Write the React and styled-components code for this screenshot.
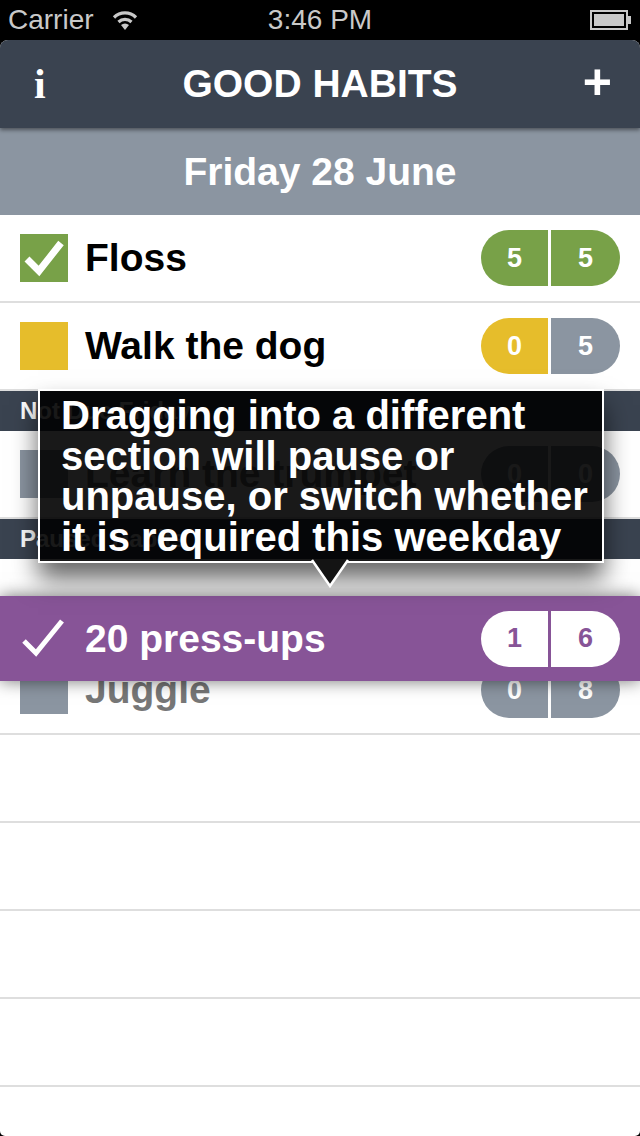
import React from 'react';
import styled, { createGlobalStyle } from 'styled-components';

const GlobalStyle = createGlobalStyle`
  html, body {
    margin: 0;
    padding: 0;
    background: #000;
  }
  body {
    font-family: 'Liberation Sans', Arial, sans-serif;
  }
`;

const slate = '#3a4350';
const steel = '#8b95a1';
const green = '#78a148';
const yellow = '#e6bd2b';
const purple = '#875497';

const Screen = styled.div`
  position: relative;
  width: 640px;
  height: 1136px;
  overflow: hidden;
  background: #000;
  display: flex;
  flex-direction: column;
`;

const StatusBar = styled.div`
  height: 40px;
  flex: none;
  display: grid;
  grid-template-columns: 1fr auto 1fr;
  align-items: center;
  padding: 0 8px;
  color: #c9c9c9;
  font-size: 28px;
`;

const Carrier = styled.div`
  display: flex;
  align-items: center;
  gap: 16px;
`;

const Battery = styled.div`
  justify-self: end;
  display: flex;
  align-items: center;
`;

const Body = styled.div`
  flex: 1;
  display: flex;
  flex-direction: column;
  background: #fff;
  border-radius: 8px 8px 5px 5px;
  overflow: hidden;
`;

const NavBar = styled.div`
  position: relative;
  z-index: 2;
  height: 88px;
  flex: none;
  display: grid;
  grid-template-columns: 84px 1fr 84px;
  align-items: center;
  background: ${slate};
  color: #fff;
  box-shadow: 0 2px 4px rgba(0, 0, 0, 0.45);
`;

const InfoButton = styled.span`
  font-family: 'Liberation Serif', 'Times New Roman', serif;
  font-weight: bold;
  font-size: 42px;
  padding-left: 34px;
`;

const Title = styled.h1`
  margin: 0;
  text-align: center;
  font-size: 39px;
  font-weight: bold;
`;

const AddButton = styled.span`
  justify-self: end;
  padding-right: 28px;
  font-size: 50px;
  font-weight: bold;
  line-height: 1;
  margin-top: -4px;
`;

const DateBar = styled.div`
  height: 87px;
  flex: none;
  display: flex;
  align-items: center;
  justify-content: center;
  background: ${steel};
  color: #fff;
  font-size: 39px;
  font-weight: bold;
`;

const Row = styled.div`
  height: 86px;
  flex: none;
  display: flex;
  align-items: center;
  gap: 17px;
  padding: 0 20px;
  background: ${({ $bg }) => $bg || '#fff'};
  border-bottom: 2px solid ${({ $line }) => $line || '#dedede'};
`;

const Label = styled.span`
  flex: 1;
  font-size: 39px;
  font-weight: bold;
  color: ${({ $color }) => $color || '#000'};
`;

const Square = styled.div`
  width: 48px;
  height: 48px;
  flex: none;
  background: ${({ $color }) => $color};
`;

const Counts = styled.div`
  display: flex;
  gap: 3px;
`;

const Count = styled.div`
  width: 67px;
  height: 56px;
  display: flex;
  align-items: center;
  justify-content: center;
  background: ${({ $bg }) => $bg};
  color: ${({ $color }) => $color || '#fff'};
  font-size: 27px;
  font-weight: bold;

  &:first-child {
    border-radius: 28px 0 0 28px;
  }
  &:last-child {
    width: 69px;
    border-radius: 0 28px 28px 0;
  }
`;

const SectionHeader = styled.div`
  height: 40px;
  flex: none;
  display: flex;
  align-items: center;
  padding: 0 20px;
  background: ${slate};
  color: #fff;
  font-size: 24px;
  font-weight: bold;
`;

const Gap = styled.div`
  height: 88px;
  flex: none;
`;

const DraggedRow = styled(Row)`
  position: absolute;
  top: 596px;
  left: 0;
  right: 0;
  height: 85px;
  z-index: 5;
  border-bottom: none;
  box-shadow: 0 0 16px rgba(0, 0, 0, 0.55);
`;

const Tooltip = styled.div`
  position: absolute;
  top: 389px;
  left: 38px;
  width: 566px;
  height: 174px;
  box-sizing: border-box;
  z-index: 6;
  padding: 4px 8px 4px 21px;
  border: 2px solid #fff;
  background: rgba(0, 0, 0, 0.9);
  color: #fff;
  font-size: 40px;
  font-weight: bold;
  line-height: 40.5px;
  white-space: nowrap;
  box-shadow: 0 16px 24px rgba(0, 0, 0, 0.6);
`;

const Tail = styled.svg`
  position: absolute;
  left: 270px;
  bottom: -29px;
`;

const Check = () => (
  <svg width="48" height="48" viewBox="0 0 48 48">
    <rect width="48" height="48" fill={green} />
    <path d="M7 25 L19 37 L41 9" fill="none" stroke="#fff" strokeWidth="7" />
  </svg>
);

const Tick = () => (
  <svg width="48" height="48" viewBox="0 0 48 48">
    <path d="M4 26 L16 38 L42 6" fill="none" stroke="#fff" strokeWidth="5" />
  </svg>
);

const Wifi = () => (
  <svg width="30" height="22" viewBox="0 0 30 22">
    <path d="M15 21 L11 16 A6 6 0 0 1 19 16 Z" fill="#c9c9c9" />
    <path d="M8.5 13 A9.5 9.5 0 0 1 21.5 13" fill="none" stroke="#c9c9c9" strokeWidth="3.2" />
    <path d="M4 8.5 A15.5 15.5 0 0 1 26 8.5" fill="none" stroke="#c9c9c9" strokeWidth="3.2" />
  </svg>
);

const BatteryIcon = () => (
  <svg width="42" height="20" viewBox="0 0 42 20">
    <rect x="1" y="1" width="36" height="18" fill="none" stroke="#c9c9c9" strokeWidth="2" />
    <rect x="4" y="4" width="30" height="12" fill="#c9c9c9" />
    <rect x="38" y="6" width="3" height="8" fill="#c9c9c9" />
  </svg>
);

const habits = [
  { name: 'Floss', done: true, counts: [['5', green], ['5', green]] },
  { name: 'Walk the dog', square: yellow, counts: [['0', yellow], ['5', steel]] },
];

const emptyRows = [1, 2, 3, 4];

const App = () => (
  <Screen>
    <GlobalStyle />
    <StatusBar>
      <Carrier>
        Carrier <Wifi />
      </Carrier>
      <span>3:46 PM</span>
      <Battery>
        <BatteryIcon />
      </Battery>
    </StatusBar>

    <Body>
      <NavBar>
        <InfoButton>i</InfoButton>
        <Title>GOOD HABITS</Title>
        <AddButton>+</AddButton>
      </NavBar>
      <DateBar>Friday 28 June</DateBar>

      {habits.map((h) => (
        <Row key={h.name}>
          {h.done ? <Check /> : <Square $color={h.square} />}
          <Label>{h.name}</Label>
          <Counts>
            {h.counts.map(([n, c], i) => (
              <Count key={i} $bg={c}>
                {n}
              </Count>
            ))}
          </Counts>
        </Row>
      ))}

      <SectionHeader>Not Due Friday</SectionHeader>
      <Row>
        <Square $color={steel} />
        <Label $color="#7a7a7a">Learn the trumpet</Label>
        <Counts>
          <Count $bg={steel}>0</Count>
          <Count $bg={steel}>0</Count>
        </Counts>
      </Row>
      <SectionHeader>Paused Habits</SectionHeader>
      <Gap />
      <Row>
        <Square $color={steel} />
        <Label $color="#777">Juggle</Label>
        <Counts>
          <Count $bg={steel}>0</Count>
          <Count $bg={steel}>8</Count>
        </Counts>
      </Row>
      {emptyRows.map((r) => (
        <Row key={r} />
      ))}
    </Body>

    <Tooltip>
      Dragging into a different
      <br />
      section will pause or
      <br />
      unpause, or switch whether
      <br />
      it is required this weekday
      <Tail width="40" height="31" viewBox="0 0 40 31">
        <path d="M2 0 L20 27 L38 0 Z" fill="#141414" />
        <path d="M2 1 L20 27 L38 1" fill="none" stroke="#fff" strokeWidth="2.5" />
      </Tail>
    </Tooltip>

    <DraggedRow $bg={purple}>
      <Tick />
      <Label $color="#fff">20 press-ups</Label>
      <Counts>
        <Count $bg="#fff" $color={purple}>1</Count>
        <Count $bg="#fff" $color={purple}>6</Count>
      </Counts>
    </DraggedRow>
  </Screen>
);

export default App;
